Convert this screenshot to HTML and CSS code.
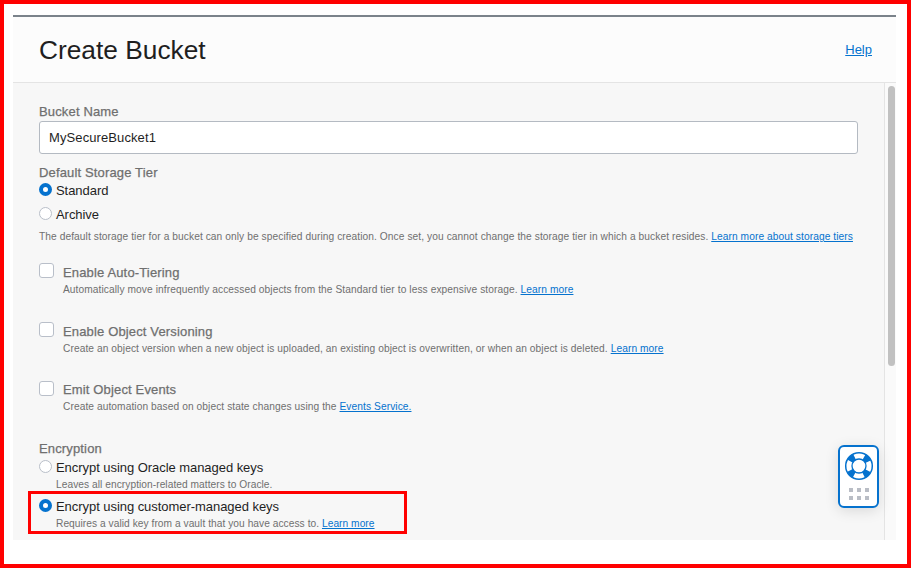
FILE: index.html
```html
<!DOCTYPE html>
<html lang="en">
<head>
<meta charset="utf-8">
<title>Create Bucket</title>
<link rel="stylesheet" href="styles.css">
</head>
<body>
<main class="frame">
  <section class="panel">
    <header class="header">
      <h1 class="title">Create Bucket</h1>
      <a class="help">Help</a>
    </header>
    <div class="body">
      <form class="form">
        <div class="label">Bucket Name</div>
        <div class="input">MySecureBucket1</div>
        <div class="label tier-label">Default Storage Tier</div>
        <div class="option"><i class="radio on"></i><span>Standard</span></div>
        <div class="option archive"><i class="radio"></i><span>Archive</span></div>
        <p class="hint tier-hint">The default storage tier for a bucket can only be specified during creation. Once set, you cannot change the storage tier in which a bucket resides. <a>Learn more about storage tiers</a></p>
        <div class="check auto">
          <i class="box"></i>
          <div><div class="label">Enable Auto-Tiering</div>
          <p class="hint">Automatically move infrequently accessed objects from the Standard tier to less expensive storage. <a>Learn more</a></p></div>
        </div>
        <div class="check versioning">
          <i class="box"></i>
          <div><div class="label">Enable Object Versioning</div>
          <p class="hint">Create an object version when a new object is uploaded, an existing object is overwritten, or when an object is deleted. <a>Learn more</a></p></div>
        </div>
        <div class="check events">
          <i class="box"></i>
          <div><div class="label">Emit Object Events</div>
          <p class="hint">Create automation based on object state changes using the <a>Events Service.</a></p></div>
        </div>
        <div class="label enc-label">Encryption</div>
        <div class="option"><i class="radio"></i><span>Encrypt using Oracle managed keys</span></div>
        <p class="hint sub">Leaves all encryption-related matters to Oracle.</p>
        <div class="marked">
          <div class="option"><i class="radio on"></i><span>Encrypt using customer-managed keys</span></div>
          <p class="hint sub">Requires a valid key from a vault that you have access to. <a>Learn more</a></p>
        </div>
      </form>
      <div class="track"><div class="thumb"></div></div>
    </div>
  </section>
  <div class="support">
    <svg width="30" height="30" viewBox="0 0 30 30" fill="none" stroke="#0572ce">
      <circle cx="15" cy="15" r="10.2" stroke-width="6.5" stroke-dasharray="6.2 9.822" stroke-dashoffset="-4.911"/>
      <circle cx="15" cy="15" r="13.3" stroke-width="1.5"/>
      <circle cx="15" cy="15" r="7" stroke-width="1.3"/>
    </svg>
    <div class="dots"><i></i><i></i><i></i><i></i><i></i><i></i></div>
  </div>
</main>
</body>
</html>
```
FILE: styles.css
```css
* { box-sizing: border-box; }
body {
  margin: 0;
  background: #fff;
  font-family: "Liberation Sans", Arial, sans-serif;
  font-size: 13px;
  color: #1f1f1f;
}
.frame {
  position: relative;
  width: 911px;
  height: 568px;
  padding: 11px 11px 0 9px;
  border: 4px solid #f00;
}
.panel { width: 883px; height: 525px; background: #f7f7f7; }
.header {
  display: flex;
  justify-content: space-between;
  height: 68px;
  padding: 0 24px 0 26px;
  background: #fcfcfc;
  border-top: 2px solid #7b838b;
  border-bottom: 1px solid #e4e4e4;
}
.title { margin: 17px 0 0; font-size: 26.3px; font-weight: 400; line-height: 33px; }
.help { margin-top: 24px; line-height: 17px; }
a { color: #0572ce; text-decoration: underline; text-underline-offset: 1px; }
.body { display: flex; justify-content: space-between; height: 457px; }
.form { width: 845px; padding: 21px 0 0 26px; }
.label { height: 17px; line-height: 16px; letter-spacing: 0.15px; color: #6f6f6f; -webkit-text-stroke: 0.25px #6f6f6f; white-space: nowrap; }
.input {
  width: 819px;
  height: 33px;
  padding-left: 9px;
  line-height: 32px;
  letter-spacing: 0.1px;
  background: #fff;
  border: 1px solid #b4bac2;
  border-radius: 3px;
}
.tier-label { margin-top: 11px; height: 18px; }
.option { display: flex; height: 16px; line-height: 16px; gap: 4px; letter-spacing: -0.05px; white-space: nowrap; }
.archive { margin-top: 8px; }
.radio {
  width: 13px;
  height: 13px;
  background: #fff;
  border: 1px solid #b9bfc9;
  border-radius: 50%;
}
.on { border: 4.5px solid #0572ce; }
.hint { margin: 0; height: 14px; font-size: 10.2px; line-height: 16px; letter-spacing: 0.08px; color: #6f6f6f; white-space: nowrap; }
.tier-hint { margin-top: 6px; }
.check { display: flex; gap: 9px; height: 59px; }
.auto { margin-top: 22px; }
.versioning { height: 58px; }
.box { width: 15px; height: 15px; margin-top: -2px; background: #fff; border: 1px solid #b9bfc9; border-radius: 3px; }
.events .box { margin-top: -1px; }
.enc-label { height: 19px; }
.sub { margin: 1px 0 0 17px; letter-spacing: 0.05px; }
.marked { width: 379px; height: 43px; margin: 0 0 0 -11px; padding: 5px 0 0 8px; border: 3px solid #f00; }
.marked .sub { letter-spacing: 0.045px; }
.track { width: 12px; background: #fafafa; border-left: 1px solid #e4e4e4; padding: 3px 1px 0 3px; }
.thumb { width: 7px; height: 280px; border-radius: 4px; background: #c1c1c1; }
.support {
  position: absolute;
  left: 834px;
  top: 441px;
  display: flex;
  flex-direction: column;
  align-items: center;
  width: 41px;
  height: 63px;
  padding-top: 4px;
  background: #fff;
  border: 2px solid #0572ce;
  border-radius: 6px;
  box-shadow: 0 3px 14px rgba(0, 0, 0, 0.12);
}
.dots { display: grid; grid-template-columns: repeat(3, 4px); gap: 4px; margin-top: 7px; }
.dots i { height: 4px; background: #b9bdc5; }
```
